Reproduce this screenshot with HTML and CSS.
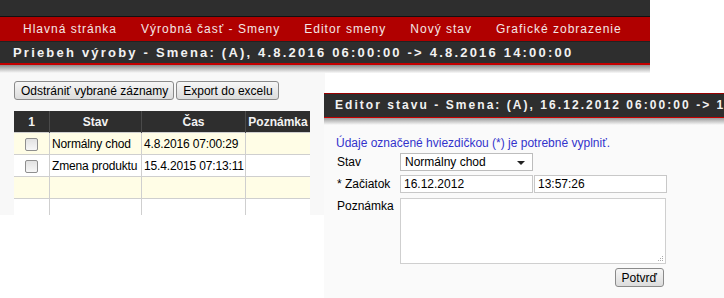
FILE: index.html
```html
<!DOCTYPE html>
<html lang="sk">
<head>
  <meta charset="UTF-8" />
  <title>Priebeh výroby</title>
  <link rel="stylesheet" href="styles.css">
</head>
<body>
  <div class="page">
    <div class="topbar"></div>
    <ul class="nav">
      <li>Hlavná stránka</li>
      <li>Výrobná časť - Smeny</li>
      <li>Editor smeny</li>
      <li>Nový stav</li>
      <li>Grafické zobrazenie</li>
    </ul>
    <div class="title">Priebeh výroby - Smena: (A), 4.8.2016 06:00:00 -&gt; 4.8.2016 14:00:00</div>
    <div class="shadow"></div>

    <div class="content">
      <div class="actions">
        <button class="btn">Odstrániť vybrané záznamy</button>
        <button class="btn">Export do excelu</button>
      </div>

      <table class="grid">
        <tr>
          <th class="c1">1</th>
          <th class="c2">Stav</th>
          <th class="c3">Čas</th>
          <th class="c4">Poznámka</th>
        </tr>
        <tr class="alt">
          <td class="chk"><span class="box"></span></td>
          <td>Normálny chod</td>
          <td>4.8.2016 07:00:29</td>
          <td></td>
        </tr>
        <tr>
          <td class="chk"><span class="box"></span></td>
          <td>Zmena produktu</td>
          <td>15.4.2015 07:13:11</td>
          <td></td>
        </tr>
        <tr class="alt empty">
          <td></td><td></td><td></td><td></td>
        </tr>
        <tr class="empty last">
          <td></td><td></td><td></td><td></td>
        </tr>
      </table>
    </div>
  </div>

  <!-- okno editora stavu -->
  <div class="editor">
    <div class="title etitle">Editor stavu - Smena: (A), 16.12.2012 06:00:00 -&gt; 16.12.2012 14:00:00</div>
    <div class="shadow"></div>
    <div class="eform">
      <p class="hint">Údaje označené hviezdičkou (*) je potrebné vyplniť.</p>
      <div class="row">
        <label>Stav</label>
        <div class="select">Normálny chod<span class="arrow"></span></div>
      </div>
      <div class="row">
        <label>* Začiatok</label>
        <div class="input">16.12.2012</div>
        <div class="input">13:57:26</div>
      </div>
      <div class="row">
        <label>Poznámka</label>
        <div class="textarea">
          <svg class="grip" width="7" height="7" viewBox="0 0 7 7">
            <rect x="5" y="1" width="1" height="1" fill="#aaa"/>
            <rect x="3" y="3" width="1" height="1" fill="#aaa"/>
            <rect x="5" y="3" width="1" height="1" fill="#aaa"/>
            <rect x="1" y="5" width="1" height="1" fill="#aaa"/>
            <rect x="3" y="5" width="1" height="1" fill="#aaa"/>
            <rect x="5" y="5" width="1" height="1" fill="#aaa"/>
          </svg>
        </div>
      </div>
      <div class="submit">
        <button class="btn">Potvrď</button>
      </div>
    </div>
  </div>
</body>
</html>
```

FILE: styles.css
```css
body { margin: 0; background: #fff; font-family: "Liberation Sans", Arial, sans-serif; font-size: 12px; color: #000; overflow: hidden; }
.page { width: 650px; }
.topbar { height: 16px; background: #2e2e2e; border-bottom: 1px solid #111; }
.nav { list-style: none; margin: 0; padding: 0 0 0 11px; height: 24px; background: #b00000; border-bottom: 1px solid #222; display: flex; align-items: center; }
.nav li { color: #f4e6e6; letter-spacing: 1px; padding: 0 12px; line-height: 24px; }
.title { height: 21px; line-height: 21px; background: #2e2e2e; border-bottom: 2px solid #c40000; color: #f2f2f2; font-size: 13px; font-weight: bold; letter-spacing: 2.2px; padding-left: 13px; white-space: nowrap; overflow: hidden; }
.shadow { height: 8px; background: linear-gradient(#8c8c8c, #f8f8f8); }
.content { box-sizing: border-box; background: #f8f8f8; width: 325px; height: 142px; padding: 8px 0 0 14px; overflow: hidden; }
.actions { display: flex; gap: 2px; }
.btn { font-family: inherit; font-size: 12px; height: 19px; margin: 0; padding: 0 5px 0 6px; border: 1px solid #8a8a8a; border-radius: 3px; background: linear-gradient(#f6f6f6, #dcdcdc); color: #000; }
.grid { border-collapse: collapse; margin-top: 11px; background: #fff; table-layout: fixed; width: 296px; }
.grid th { background: #2e2e2e; color: #f2f2f2; font-weight: bold; height: 21px; padding: 0; border-left: 1px solid #4a4a4a; white-space: nowrap; }
.grid th.c1 { width: 35px; border-left: none; }
.grid th.c2 { width: 91px; }
.grid th.c3 { width: 103px; }
.grid td { height: 21px; padding: 0 0 0 2px; border: 1px solid #cfcfcf; white-space: nowrap; overflow: hidden; letter-spacing: -0.15px; }
.grid tr td:first-child { border-left: none; }
.grid tr td:last-child { border-right: none; }
.grid tr.alt td { background: #fffde6; }
.grid td.chk { text-align: center; padding: 0; }
.box { display: inline-block; width: 11px; height: 11px; border: 1px solid #8f8f8f; border-radius: 2px; background: linear-gradient(#e2e2e2, #f7f7f7); vertical-align: middle; }
.grid tr.last td { border-bottom: none; }

.editor { position: absolute; left: 324px; top: 93px; right: 0; bottom: 0; background: #fafafa; }
.etitle { border-top: 1px solid #9a0000; height: 23px; line-height: 23px; border-bottom: 1px solid #c40000; padding-left: 11px; font-size: 12px; letter-spacing: 2.05px; }
.editor .shadow { height: 7px; background: linear-gradient(#9a9a9a, #fafafa); }
.eform { padding: 0 0 0 12px; }
.hint { margin: 11px 0 3px; color: #3333cc; }
.row { display: flex; align-items: flex-start; margin-bottom: 4px; }
.row label { width: 63px; line-height: 18px; padding-left: 1px; }
.select, .input { box-sizing: border-box; height: 18px; line-height: 16px; background: #fff; border: 1px solid #c8c8c8; padding-left: 4px; }
.select { width: 133px; position: relative; border-color: #bdbdbd; }
.arrow { position: absolute; right: 7px; top: 7px; border-left: 4px solid transparent; border-right: 4px solid transparent; border-top: 4px solid #222; }
.input { width: 133px; margin-right: 1px; padding-left: 3px; }
.textarea { box-sizing: border-box; width: 266px; height: 66px; background: #fff; border: 1px solid #cfcfcf; position: relative; margin-top: 1px; }
.grip { position: absolute; right: 1px; bottom: 1px; }
.submit { width: 328px; display: flex; justify-content: flex-end; margin-top: 4px; }
.submit .btn { height: 19px; padding: 0 6px; }
```
